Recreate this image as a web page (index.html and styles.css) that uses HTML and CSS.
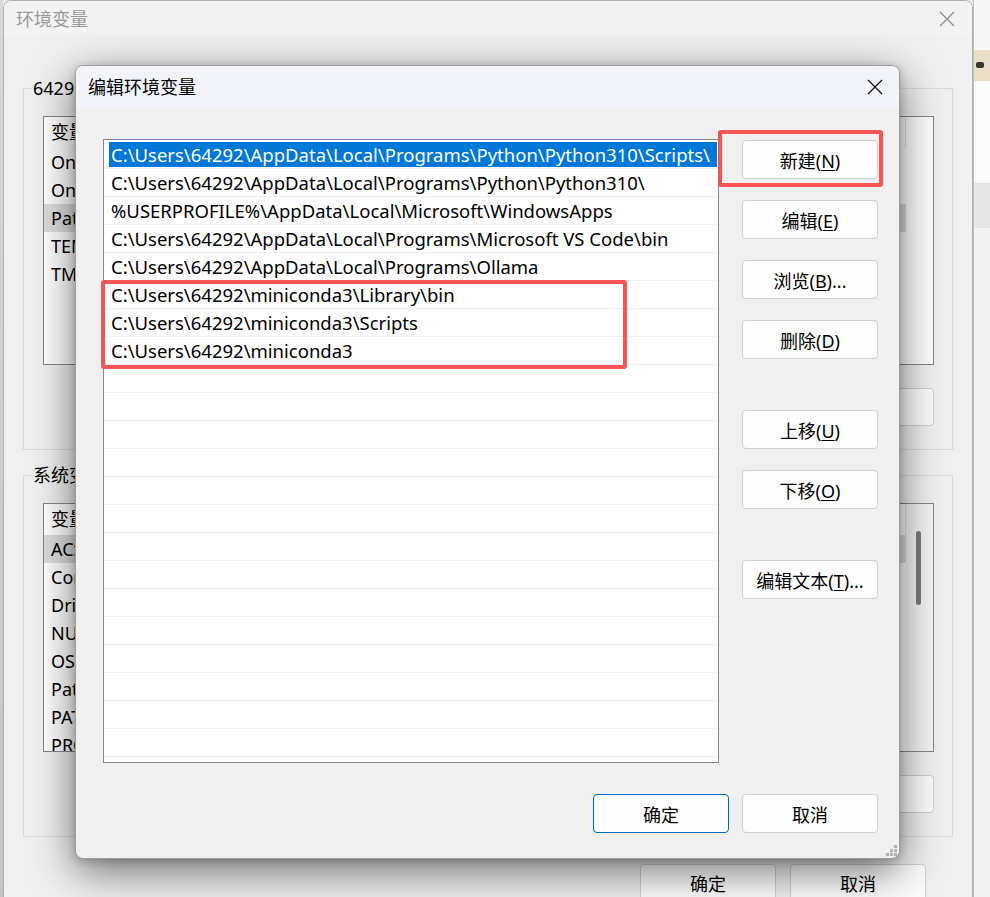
FILE: index.html
```html
<!DOCTYPE html>
<html lang="zh-CN">

<head>
    <meta charset="UTF-8">
    <meta name="viewport" content="width=device-width, initial-scale=1.0">
    <title>编辑环境变量</title>
    <link rel="stylesheet" href="styles.css">
</head>

<body>

    <div class="edge-left"></div>

    <!-- janela de fundo: 环境变量 -->
    <div class="win back">
        <div class="titlebar">
            <span class="title">环境变量</span>
            <svg class="close" width="16" height="16" viewBox="0 0 16 16">
                <path d="M1 1 L15 15 M15 1 L1 15" stroke="#8c8c8c" stroke-width="1.2" fill="none" />
            </svg>
        </div>

        <div class="back-body">
            <fieldset class="group">
                <legend>64292 的用户变量(<u>U</u>)</legend>
                <div class="vlist">
                    <div class="vhead"><span class="c1">变量</span></div>
                    <div class="vrow"><span class="c1">OneDrive</span></div>
                    <div class="vrow"><span class="c1">OneDriveConsumer</span></div>
                    <div class="vrow sel"><span class="c1">Path</span></div>
                    <div class="vrow"><span class="c1">TEMP</span></div>
                    <div class="vrow"><span class="c1">TMP</span></div>
                </div>
                <div class="btn-row">
                    <button class="btn">新建(<u>N</u>)...</button>
                    <button class="btn">编辑(<u>E</u>)...</button>
                    <button class="btn">删除(<u>D</u>)</button>
                </div>
            </fieldset>

            <fieldset class="group second">
                <legend>系统变量(<u>S</u>)</legend>
                <div class="vlist has-scroll">
                    <div class="vhead"><span class="c1">变量</span></div>
                    <div class="vrow sel"><span class="c1">ACSvcPort</span></div>
                    <div class="vrow"><span class="c1">ComSpec</span></div>
                    <div class="vrow"><span class="c1">DriverData</span></div>
                    <div class="vrow"><span class="c1">NUMBER_OF_PROCESSORS</span></div>
                    <div class="vrow"><span class="c1">OS</span></div>
                    <div class="vrow"><span class="c1">Path</span></div>
                    <div class="vrow"><span class="c1">PATHEXT</span></div>
                    <div class="vrow"><span class="c1">PROCESSOR_ARCHITECTURE</span></div>
                    <div class="scrollbar"><div class="thumb"></div></div>
                </div>
                <div class="btn-row">
                    <button class="btn">新建(<u>W</u>)...</button>
                    <button class="btn">编辑(<u>I</u>)...</button>
                    <button class="btn">删除(<u>L</u>)</button>
                </div>
            </fieldset>

            <div class="back-footer">
                <button class="btn">确定</button>
                <button class="btn">取消</button>
            </div>
        </div>
    </div>

    <!-- o que aparece do desktop à direita -->
    <div class="edge-right">
        <div class="band top"></div>
        <div class="band beige"><span class="tiny"></span></div>
        <div class="band white"></div>
        <div class="band grey"></div>
    </div>

    <!-- dialogo principal: 编辑环境变量 -->
    <div class="win dialog">
        <div class="titlebar dlg-title">
            <span class="title">编辑环境变量</span>
            <svg class="close" width="16" height="16" viewBox="0 0 16 16">
                <path d="M1 1 L15 15 M15 1 L1 15" stroke="#111" stroke-width="1.2" fill="none" />
            </svg>
        </div>

        <div class="dlg-body">
            <div class="path-list">
                <div class="prow sel"><span>C:\Users\64292\AppData\Local\Programs\Python\Python310\Scripts\</span></div>
                <div class="prow"><span>C:\Users\64292\AppData\Local\Programs\Python\Python310\</span></div>
                <div class="prow"><span>%USERPROFILE%\AppData\Local\Microsoft\WindowsApps</span></div>
                <div class="prow"><span>C:\Users\64292\AppData\Local\Programs\Microsoft VS Code\bin</span></div>
                <div class="prow"><span>C:\Users\64292\AppData\Local\Programs\Ollama</span></div>
                <div class="prow"><span>C:\Users\64292\miniconda3\Library\bin</span></div>
                <div class="prow"><span>C:\Users\64292\miniconda3\Scripts</span></div>
                <div class="prow"><span>C:\Users\64292\miniconda3</span></div>
                <div class="prow"></div>
                <div class="prow"></div>
                <div class="prow"></div>
                <div class="prow"></div>
                <div class="prow"></div>
                <div class="prow"></div>
                <div class="prow"></div>
                <div class="prow"></div>
                <div class="prow"></div>
                <div class="prow"></div>
                <div class="prow"></div>
                <div class="prow"></div>
                <div class="prow"></div>
                <div class="prow"></div>
            </div>

            <div class="side-btns">
                <button class="btn">新建(<u>N</u>)</button>
                <button class="btn">编辑(<u>E</u>)</button>
                <button class="btn">浏览(<u>B</u>)...</button>
                <button class="btn">删除(<u>D</u>)</button>
                <button class="btn spaced">上移(<u>U</u>)</button>
                <button class="btn">下移(<u>O</u>)</button>
                <button class="btn spaced">编辑文本(<u>T</u>)...</button>
            </div>
        </div>

        <div class="dlg-footer">
            <button class="btn default">确定</button>
            <button class="btn">取消</button>
        </div>

        <svg class="grip" width="11" height="11" viewBox="0 0 11 11">
            <rect x="8" y="0" width="3" height="3" fill="#b4b4b4" />
            <rect x="4" y="4" width="3" height="3" fill="#b4b4b4" />
            <rect x="8" y="4" width="3" height="3" fill="#b4b4b4" />
            <rect x="0" y="8" width="3" height="3" fill="#b4b4b4" />
            <rect x="4" y="8" width="3" height="3" fill="#b4b4b4" />
            <rect x="8" y="8" width="3" height="3" fill="#b4b4b4" />
        </svg>
    </div>

    <!-- marcações vermelhas -->
    <div class="mark mark-list"></div>
    <div class="mark mark-new"></div>

</body>

</html>
```

FILE: styles.css
```css
* {
    margin: 0;
    padding: 0;
    box-sizing: border-box;
}

body {
    position: relative;
    width: 990px;
    height: 897px;
    overflow: hidden;
    background-color: #ececec;
    font-family: "Noto Sans", "Noto Sans CJK SC", sans-serif;
    font-size: 18px;
    color: #000;
}

u {
    text-underline-offset: 2px;
    text-decoration-thickness: 1px;
}

/* bordas do desktop */
.edge-left {
    position: absolute;
    left: 0;
    top: 0;
    width: 3px;
    height: 897px;
    background: linear-gradient(#d8d8d8, #c4c4c4);
}

.edge-right {
    position: absolute;
    left: 973px;
    top: 0;
    width: 17px;
    height: 897px;
    display: flex;
    flex-direction: column;
    background-color: #f3f3f3;
    border-left: 1px solid #bcbcbc;
}

.band.top {
    height: 50px;
    background-color: #f7f7f7;
}

.band.beige {
    height: 31px;
    background-color: #e9dfc7;
    padding: 12px 0 0 2px;
}

.band .tiny {
    display: block;
    width: 8px;
    height: 6px;
    background-color: #333;
    border-radius: 2px;
}

.band.white {
    height: 102px;
    background-color: #fbfbfb;
}

.band.grey {
    height: 45px;
    background-color: #e6e6e6;
}

/* janelas */
.win {
    position: absolute;
    background-color: #f0f0f0;
    overflow: hidden;
}

.titlebar {
    display: flex;
    align-items: center;
    justify-content: space-between;
    line-height: 24px;
}

.win.back {
    left: 3px;
    top: 0;
    width: 970px;
    height: 930px;
    border: 1px solid #b0b0b0;
    border-radius: 8px 8px 0 0;
}

.back .titlebar {
    height: 35px;
    padding: 0 17px 0 12px;
    background-color: #f3f3f3;
}

.back .title {
    color: #9a9a9a;
}

.back-body {
    padding: 0 19px 0 19px;
}

.group {
    margin-top: 40px;
    border: 1px solid #dcdcdc;
    padding: 16px 18px 23px 19px;
}

.group.second {
    margin-top: 13px;
}

.group legend {
    margin-left: -12px;
    padding: 0 2px;
    line-height: 24px;
}

.vlist {
    position: relative;
    height: 249px;
    background-color: #fff;
    border: 1px solid #828790;
    line-height: 28px;
    overflow: hidden;
}

.vhead {
    display: flex;
    height: 31px;
    line-height: 31px;
    border-right: 1px solid #e5e5e5;
    width: 862px;
}

.vrow {
    display: flex;
    height: 28px;
    width: 862px;
}

.vrow.sel {
    background-color: #dedede;
}

.vlist .c1 {
    width: 270px;
    padding-left: 7px;
    white-space: nowrap;
}

.scrollbar {
    position: absolute;
    right: 0;
    top: 0;
    width: 27px;
    height: 100%;
    background-color: #f4f4f4;
}

.scrollbar .thumb {
    width: 5px;
    height: 74px;
    margin: 27px 0 0 10px;
    border-radius: 3px;
    background-color: #7b7b7b;
}

.btn-row {
    display: flex;
    justify-content: flex-end;
    gap: 14px;
    margin-top: 23px;
}

.btn {
    width: 136px;
    height: 38px;
    font-family: "Noto Sans", "Noto Sans CJK SC", sans-serif;
    font-size: 18px;
    color: #000;
    background-color: #fdfdfd;
    border: 1px solid #d0d0d0;
    border-radius: 4px;
}

.back-footer {
    display: flex;
    justify-content: flex-end;
    gap: 14px;
    margin-top: 27px;
    padding-right: 27px;
}

/* dialogo */
.win.dialog {
    left: 75px;
    top: 65px;
    width: 825px;
    height: 794px;
    border: 1px solid #9d9d9d;
    border-radius: 8px;
    box-shadow: 0 12px 44px rgba(0, 0, 0, 0.55), 0 2px 8px rgba(0, 0, 0, 0.2);
}

.dlg-title {
    height: 42px;
    padding: 0 16px 0 12px;
    background-color: #f2f4fa;
}

.dlg-body {
    display: flex;
    gap: 23px;
    padding: 31px 21px 0 27px;
}

.path-list {
    width: 616px;
    height: 624px;
    padding-top: 1px;
    background-color: #fff;
    border: 1px solid #828790;
    overflow: hidden;
}

.prow {
    height: 28px;
    padding: 1px 1px 1px 5px;
    border-bottom: 1px solid #efefef;
    line-height: 25px;
    font-size: 18.5px;
    white-space: nowrap;
}

.prow span {
    display: block;
    height: 25px;
    padding-left: 2px;
}

.prow.sel span {
    background-color: #0078d7;
    color: #fff;
}

.side-btns {
    display: flex;
    flex-direction: column;
    gap: 21px;
    padding-top: 1px;
}

.side-btns .btn {
    height: 39px;
}

.side-btns .btn.spaced {
    margin-top: 30px;
}

.dlg-footer {
    display: flex;
    justify-content: flex-end;
    gap: 13px;
    padding: 31px 21px 0 0;
}

.dlg-footer .btn {
    height: 39px;
}

.btn.default {
    border-color: #0067c0;
}

.grip {
    position: absolute;
    right: 2px;
    bottom: 2px;
}

/* marcações */
.mark {
    position: absolute;
    border: 4px solid #f55555;
    border-radius: 3px;
}

.mark-list {
    left: 101px;
    top: 280px;
    width: 526px;
    height: 89px;
}

.mark-new {
    left: 718px;
    top: 130px;
    width: 165px;
    height: 57px;
}
```
